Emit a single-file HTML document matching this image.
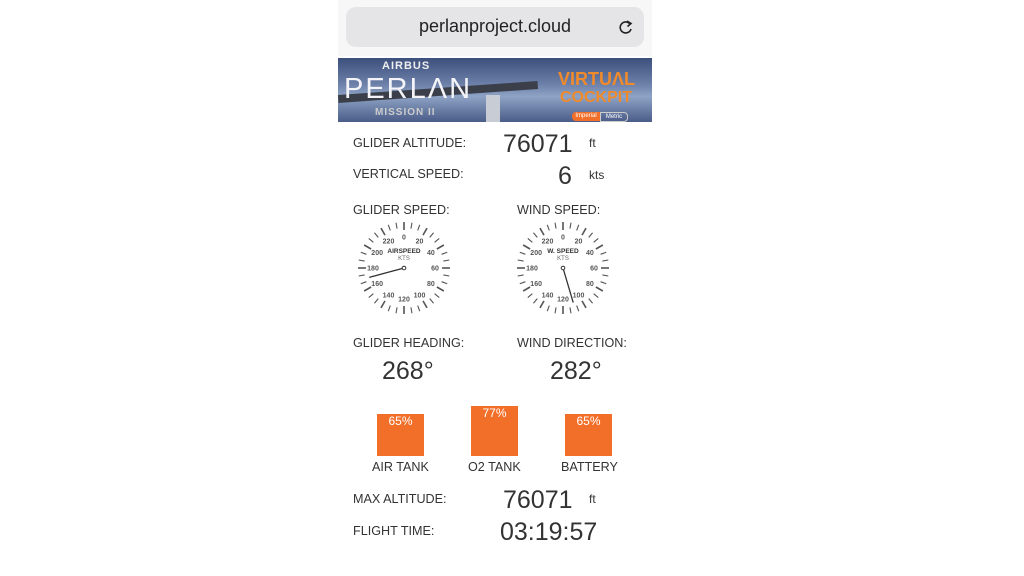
<!DOCTYPE html>
<html><head><meta charset="utf-8"><style>
body{margin:0;width:1024px;height:576px;background:#fff;position:relative;overflow:hidden;font-family:"Liberation Sans",sans-serif;color:#333}
.a{position:absolute;white-space:nowrap}
.l{font-size:12.6px;color:#333}
.big{font-size:25px;color:#333}
.bar{position:absolute;background:#f26f2a;color:#fff;font-size:12px;text-align:center}
</style></head><body>
<div class="a" style="left:338px;top:0;width:314px;height:56px;background:#f7f7f7"></div>
<div class="a" style="left:346px;top:7px;width:298px;height:40px;background:#e5e5e7;border-radius:10px"></div>
<div class="a" style="left:338px;top:16px;width:314px;text-align:center;font-size:18px;color:#222;padding-right:2px">perlanproject.cloud</div>
<svg class="a" style="left:618px;top:18px" width="16" height="18" viewBox="0 0 16 18"><path d="M12 6 A5.5 5.5 0 1 0 13 11" fill="none" stroke="#222" stroke-width="1.6"/><path d="M9 3 L13 5.5 L9.5 8.5" fill="none" stroke="#222" stroke-width="1.6"/></svg>

<div class="a" style="left:338px;top:58px;width:314px;height:64px;background:linear-gradient(180deg,#3d4f7c 0%,#6b7fa8 40%,#8ea3c5 60%,#4a5c88 100%)"></div>
<div class="a" style="left:338px;top:88px;width:200px;height:8px;background:#3a3f4a;transform:rotate(-4deg)"></div>
<div class="a" style="left:486px;top:95px;width:14px;height:27px;background:#c8ccd4"></div>
<div class="a" style="left:382px;top:60px;font-size:11px;font-weight:bold;color:#eee;letter-spacing:1px">AIRBUS</div>
<div class="a" style="left:344px;top:73px;font-size:29px;color:#f4f4f8;letter-spacing:2px">PERL&Lambda;N</div>
<div class="a" style="left:375px;top:107px;font-size:10px;font-weight:bold;color:#ccc;letter-spacing:1px">MISSION II</div>
<div class="a" style="left:558px;top:69px;font-size:18px;font-weight:bold;color:#f08a2a">VIRTU&Lambda;L</div>
<div class="a" style="left:560px;top:89px;font-size:16px;font-weight:bold;color:#f08a2a">COCKPIT</div>
<div class="a" style="left:572px;top:112px;width:28px;height:9px;background:#f26f2a;border-radius:4px 0 0 4px;font-size:6px;color:#fff;text-align:center;line-height:9px">Imperial</div>
<div class="a" style="left:600px;top:112px;width:26px;height:8px;border:0.5px solid #ccc;border-radius:0 4px 4px 0;font-size:6px;color:#fff;text-align:center;line-height:8px">Metric</div>

<div class="a l" style="left:353px;top:136px">GLIDER ALTITUDE:</div>
<div class="a big" style="left:503px;top:130px">76071</div>
<div class="a l" style="left:589px;top:136px;font-size:12px">ft</div>
<div class="a l" style="left:353px;top:167px">VERTICAL SPEED:</div>
<div class="a big" style="left:558px;top:162px">6</div>
<div class="a l" style="left:589px;top:168px;font-size:12px">kts</div>

<div class="a l" style="left:353px;top:203px">GLIDER SPEED:</div>
<div class="a l" style="left:517px;top:203px">WIND SPEED:</div>
<svg class="a" id="g1" style="left:354px;top:218px" width="100" height="100"></svg>
<svg class="a" id="g2" style="left:513px;top:218px" width="100" height="100"></svg>

<div class="a l" style="left:353px;top:336px">GLIDER HEADING:</div>
<div class="a l" style="left:517px;top:336px">WIND DIRECTION:</div>
<div class="a big" style="left:382px;top:357px">268°</div>
<div class="a big" style="left:550px;top:357px">282°</div>

<div class="bar" style="left:377px;top:414px;width:47px;height:42px">65%</div>
<div class="bar" style="left:471px;top:406px;width:47px;height:50px">77%</div>
<div class="bar" style="left:565px;top:414px;width:47px;height:42px">65%</div>
<div class="a l" style="left:372px;top:460px">AIR TANK</div>
<div class="a l" style="left:468px;top:460px">O2 TANK</div>
<div class="a l" style="left:561px;top:460px">BATTERY</div>

<div class="a l" style="left:353px;top:492px">MAX ALTITUDE:</div>
<div class="a big" style="left:503px;top:486px">76071</div>
<div class="a l" style="left:589px;top:492px;font-size:12px">ft</div>
<div class="a l" style="left:353px;top:524px">FLIGHT TIME:</div>
<div class="a big" style="left:500px;top:518px">03:19:57</div>
<script>
function g(id,label,val){var s=document.getElementById(id),c=50,o='';
for(var i=0;i<36;i++){var a=i*10*Math.PI/180,maj=i%3==0,r1=maj?38:40,r2=46;
o+='<line x1="'+(c+r1*Math.sin(a))+'" y1="'+(c-r1*Math.cos(a))+'" x2="'+(c+r2*Math.sin(a))+'" y2="'+(c-r2*Math.cos(a))+'" stroke="#555" stroke-width="'+(maj?1.6:1.1)+'"/>';}
for(var k=0;k<12;k++){var a=k*30*Math.PI/180,r=31;
o+='<text x="'+(c+r*Math.sin(a))+'" y="'+(c-r*Math.cos(a)+2.5)+'" font-size="7" font-weight="bold" fill="#555" text-anchor="middle" font-family="Liberation Sans">'+(k*20)+'</text>';}
o+='<text x="50" y="35" font-size="6.5" font-weight="bold" fill="#333" text-anchor="middle" font-family="Liberation Sans">'+label+'</text>';
o+='<text x="50" y="42" font-size="6" fill="#666" text-anchor="middle" font-family="Liberation Sans">KTS</text>';
var a=val*1.5*Math.PI/180;
o+='<line x1="50" y1="50" x2="'+(c+36*Math.sin(a))+'" y2="'+(c-36*Math.cos(a))+'" stroke="#333" stroke-width="1.3"/><circle cx="50" cy="50" r="1.8" fill="#fff" stroke="#333" stroke-width="1"/>';
s.innerHTML=o;}
g('g1','AIRSPEED',170);g('g2','W. SPEED',109);
</script>
</body></html>
